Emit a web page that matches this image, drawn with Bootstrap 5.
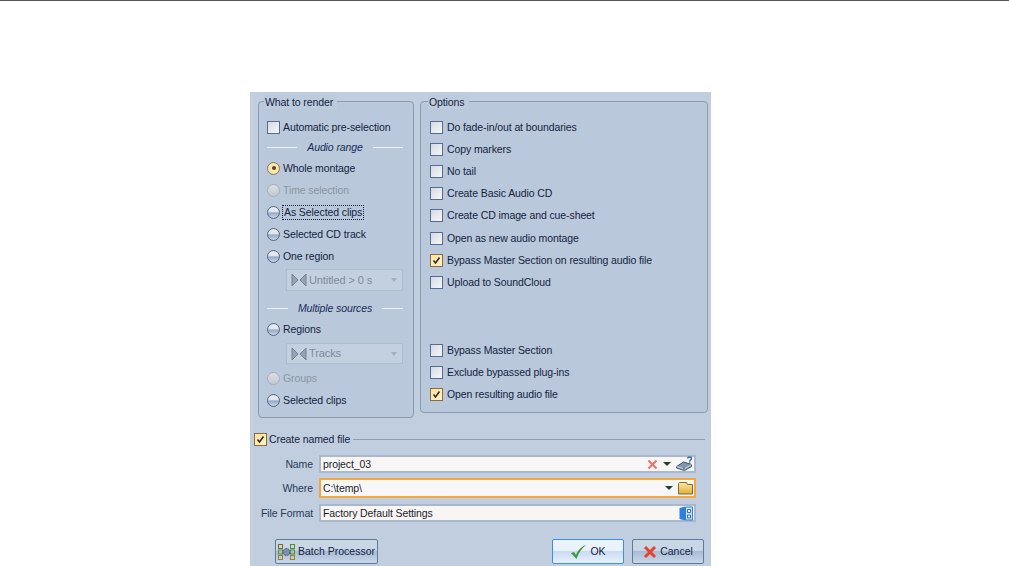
<!DOCTYPE html>
<html lang="en">
<head>
<meta charset="UTF-8">
<title>Render</title>
<link href="https://cdn.jsdelivr.net/npm/bootstrap@5.3.2/dist/css/bootstrap.min.css" rel="stylesheet">
<style>
html, body { height: 100%; overflow: hidden; }
body { background: #fff; border-top: 1px solid #555; font-family: "Liberation Sans", Arial, sans-serif; font-size: 10.5px; letter-spacing: -.1px; color: #15233f; }
.dlg { width: 461px; height: 475px; margin: 91px 0 0 250px; background: #c0cee0; padding: 9px 3px 2px 8px; }
.grp-wrap { gap: 6px; }
.grp { border: 1px solid #8a9ab0; border-radius: 4px; background: #b9c8da; }
.grp-left { width: 156px; height: 317px; padding: 0 10px 0 8px; }
.grp-right { width: 288px; height: 312px; padding: 0 8px 0 9px; }
.grp-title { display: inline-block; margin: -7px 0 0 -3px; height: 14px; line-height: 14px; padding: 0 4px 0 1px; background: #bdcbdd; vertical-align: top; }
.grp-right .grp-title { margin-left: -2px; }
.grp-head { height: 14px; }
.opt { height: 22px; gap: 4px; white-space: nowrap; }
.opt > span:last-child, .sep > span, .fld > span:first-child, .fld-row label, .named > span:nth-child(2) { padding-top: 1px; }
.opt > .focus-box:last-child { padding-top: 0; }
.grp-left .opt { gap: 3px; }
.opt.gap-fix { margin-bottom: 1px; }
.opt.off { color: #8b95a3; }
.cb { width: 13px; height: 13px; flex: none; border: 1px solid #566d93; background: linear-gradient(135deg, #d5dae2, #f6f7f9); display: flex; align-items: center; justify-content: center; }
.cb.on { border-color: #8a6d3a; background: linear-gradient(135deg, #fde2a0, #fff1c8); }
.rd { width: 13px; height: 13px; flex: none; border-radius: 50%; border: 1px solid #566680; background: linear-gradient(#e3e9f1 40%, #98aac6 55%, #c9d4e4); display: flex; align-items: center; justify-content: center; }
.rd.on { border-color: #8c7a50; background: radial-gradient(circle, #fff3cf 0, #fbd88e 100%); }
.rd.on i { width: 4px; height: 4px; border-radius: 50%; background: #5b4311; display: block; }
.rd.dis { border-color: #a7aeb8; background: linear-gradient(#dde0e4, #c3c9d1); }
.focus-box { border: 1px dotted #15233f; padding: 0 1px; margin-left: -1px; line-height: 13px; }
.sep { height: 19px; gap: 10px; font-style: italic; color: #1a2c5a; }
.sep hr, .named hr { flex: 1; margin: 0; border: 0; border-top: 1px solid #eef2f7; opacity: 1; }
.sep.a { height: 18px; margin-bottom: 1px; }
.combo { height: 22px; margin: 2px 0 0 19px; border: 1px solid #adbccf; background: #c3d0e0; color: #7e8a9b; font-size: 11px; padding-left: 4px; gap: 2px; width: 117px; }
.combo.b { height: 21px; margin-top: 3px; margin-bottom: 3px; }
.combo .arrow { margin-left: auto; margin-right: 5px; width: 0; height: 0; border: 3px solid transparent; border-top: 4px solid #a3aebd; border-bottom: 0; }
.spacer-opt { height: 46px; }
.named { height: 16px; margin: 13px 0 0 -4px; gap: 2px; padding-right: 3px; }
.named hr { border-top-color: #8e9fb4; margin-left: 1px; }
.fld-row { margin-left: -4px; gap: 5px; padding-right: 12px; }
.fld-row.r1 { margin-top: 8px; }
.fld-row.r2 { margin-top: 5px; }
.fld-row.r3 { margin-top: 6px; }
.fld-row label { width: 59px; text-align: right; color: #2a3a56; flex: none; margin: 0 1px 0 0; }
.fld { flex: 1; height: 18px; border: 2px solid #aab8cc; background: #f7f6f4; padding: 0 1px 0 2px; color: #1a1f2b; }
.fld.hot { height: 20px; border-color: #f7a63c; background: #f8f7f7; }
.fld .ic { margin-left: auto; gap: 5px; }
.tri { width: 0; height: 0; border: 4px solid transparent; border-top: 4px solid #26402f; border-bottom: 0; }
.btns { margin: 17px 0 0 17px; }
.xbtn { height: 25px; border: 1px solid #62799e; border-radius: 2px; background: linear-gradient(#c9d6e6 45%, #a9bcd6 50%, #c8d6e8); gap: 3px; font-size: 10.5px; color: #15233f; padding: 0; }
.xbtn.batch { width: 103px; }
.xbtn.ok { width: 72px; border-color: #3b8fe8; background: linear-gradient(#eaf2fb 45%, #c9dcf3 50%, #e8f1fc); }
.xbtn.cancel { width: 72px; margin-left: 8px; }
.btn-spacer { width: 174px; }
.fld svg { overflow: visible; display: block; }
</style>
</head>
<body>
<div class="dlg">
  <div class="d-flex grp-wrap">
    <div class="grp grp-left flex-none">
      <div class="grp-head"><span class="grp-title">What to render</span></div>
      <div class="opt d-flex align-items-center"><span class="cb"></span><span>Automatic pre-selection</span></div>
      <div class="sep a d-flex align-items-center"><hr><span>Audio range</span><hr></div>
      <div class="opt d-flex align-items-center"><span class="rd on"><i></i></span><span>Whole montage</span></div>
      <div class="opt off d-flex align-items-center"><span class="rd dis"></span><span>Time selection</span></div>
      <div class="opt d-flex align-items-center"><span class="rd"></span><span class="focus-box">As Selected clips</span></div>
      <div class="opt d-flex align-items-center"><span class="rd"></span><span>Selected CD track</span></div>
      <div class="opt d-flex align-items-center"><span class="rd"></span><span>One region</span></div>
      <div class="combo d-flex align-items-center">
        <svg width="16" height="14" viewBox="0 0 16 14"><path d="M1 1l6 6-6 6z" fill="#96a3b4" stroke="#76828f"/><path d="M15 1L9 7l6 6z" fill="#96a3b4" stroke="#76828f"/></svg>
        <span>Untitled &gt; 0 s</span><span class="arrow"></span>
      </div>
      <div class="sep d-flex align-items-center mt-2"><hr><span>Multiple sources</span><hr></div>
      <div class="opt d-flex align-items-center"><span class="rd"></span><span>Regions</span></div>
      <div class="combo b d-flex align-items-center">
        <svg width="16" height="14" viewBox="0 0 16 14"><path d="M1 1l6 6-6 6z" fill="#96a3b4" stroke="#76828f"/><path d="M15 1L9 7l6 6z" fill="#96a3b4" stroke="#76828f"/></svg>
        <span>Tracks</span><span class="arrow"></span>
      </div>
      <div class="opt off d-flex align-items-center"><span class="rd dis"></span><span>Groups</span></div>
      <div class="opt d-flex align-items-center"><span class="rd"></span><span>Selected clips</span></div>
    </div>
    <div class="grp grp-right flex-none">
      <div class="grp-head"><span class="grp-title">Options</span></div>
      <div class="opt d-flex align-items-center"><span class="cb"></span><span>Do fade-in/out at boundaries</span></div>
      <div class="opt d-flex align-items-center"><span class="cb"></span><span>Copy markers</span></div>
      <div class="opt d-flex align-items-center"><span class="cb"></span><span>No tail</span></div>
      <div class="opt d-flex align-items-center"><span class="cb"></span><span>Create Basic Audio CD</span></div>
      <div class="opt gap-fix d-flex align-items-center"><span class="cb"></span><span>Create CD image and cue-sheet</span></div>
      <div class="opt d-flex align-items-center"><span class="cb"></span><span>Open as new audio montage</span></div>
      <div class="opt d-flex align-items-center"><span class="cb on"><svg width="9" height="9" viewBox="0 0 9 9"><path d="M1.5 4.5L3.5 7 7.5 1.5" fill="none" stroke="#2b2a20" stroke-width="1.5"/></svg></span><span>Bypass Master Section on resulting audio file</span></div>
      <div class="opt d-flex align-items-center"><span class="cb"></span><span>Upload to SoundCloud</span></div>
      <div class="spacer-opt"></div>
      <div class="opt d-flex align-items-center"><span class="cb"></span><span>Bypass Master Section</span></div>
      <div class="opt d-flex align-items-center"><span class="cb"></span><span>Exclude bypassed plug-ins</span></div>
      <div class="opt d-flex align-items-center"><span class="cb on"><svg width="9" height="9" viewBox="0 0 9 9"><path d="M1.5 4.5L3.5 7 7.5 1.5" fill="none" stroke="#2b2a20" stroke-width="1.5"/></svg></span><span>Open resulting audio file</span></div>
    </div>
  </div>

  <div class="named d-flex align-items-center"><span class="cb on"><svg width="9" height="9" viewBox="0 0 9 9"><path d="M1.5 4.5L3.5 7 7.5 1.5" fill="none" stroke="#2b2a20" stroke-width="1.5"/></svg></span><span>Create named file</span><hr></div>

  <div class="fld-row r1 d-flex align-items-center">
    <label>Name</label>
    <div class="fld d-flex align-items-center"><span>project_03</span>
      <span class="ic d-flex align-items-center">
        <svg width="11" height="11" viewBox="0 0 11 11"><path d="M1.5 1.5l8 8M9.5 1.5l-8 8" stroke="#ea7468" stroke-width="2"/></svg>
        <span class="tri"></span>
        <svg width="17" height="14" viewBox="0 0 17 14"><path d="M.5 9.500l7-4.500 8 2.500v2l-7 4-8-2.500z" fill="#8495b0" stroke="#46546c"/><path d="M.5 9.500l8 2.500 7-4.500" fill="none" stroke="#cfd7e3"/><circle cx="8" cy="11.500" r=".9" fill="#3f9d4c"/><path d="M11.500 1.500c.5-2 4-2 4 0 0 1.500-1.800 1.500-1.800 3.200M13.700 5.500v1.200" fill="none" stroke="#2f62b8" stroke-width="1.400"/></svg>
      </span>
    </div>
  </div>
  <div class="fld-row r2 d-flex align-items-center">
    <label>Where</label>
    <div class="fld hot d-flex align-items-center"><span>C:\temp\</span>
      <span class="ic d-flex align-items-center">
        <span class="tri"></span>
        <svg width="15" height="14" viewBox="0 0 15 14"><defs><linearGradient id="fold" x1="0" y1="0" x2="0" y2="1"><stop offset="0" stop-color="#fbeaa0"/><stop offset="1" stop-color="#e3ad3a"/></linearGradient></defs><path d="M.5 13V2.500l1-1h7l1 2h5V13z" fill="url(#fold)" stroke="#7e6a34"/></svg>
      </span>
    </div>
  </div>
  <div class="fld-row r3 d-flex align-items-center">
    <label>File Format</label>
    <div class="fld d-flex align-items-center"><span>Factory Default Settings</span>
      <span class="ic d-flex align-items-center">
        <svg width="14" height="15" viewBox="0 0 14 15"><path d="M.5 2L6 .5v14L.5 13z" fill="#2f80dc"/><path d="M6.500 1h7v13h-7z" fill="#cfe3f8" stroke="#2f80dc"/><path d="M8.500 3.500h3v3h-3zM8.500 9h3v3h-3z" fill="#eaf3fc" stroke="#2f70c0"/></svg>
      </span>
    </div>
  </div>

  <div class="btns d-flex">
    <button class="btn xbtn batch d-flex align-items-center justify-content-center" type="button">
      <svg width="17" height="16" viewBox="0 0 17 16"><g fill="none" stroke-width="1"><rect x=".5" y=".5" width="4" height="4" stroke="#7c6a1f"/><rect x="12.500" y=".5" width="4" height="4" stroke="#4f8f2f"/><rect x=".5" y="6" width="4" height="4" stroke="#4f8f2f"/><rect x="12.500" y="6" width="4" height="4" stroke="#4f8f2f"/><rect x=".5" y="11.500" width="4" height="4" stroke="#a08020"/><rect x="12.500" y="11.500" width="4" height="4" stroke="#a08020"/></g><circle cx="8.500" cy="8" r="3.500" fill="#7d8db5" stroke="#47557a" stroke-dasharray="2 1"/></svg>
      <span>Batch Processor</span>
    </button>
    <div class="btn-spacer"></div>
    <button class="btn xbtn ok d-flex align-items-center justify-content-center" type="button">
      <svg width="17" height="16" viewBox="0 0 17 16"><path d="M1 9l3-1 2 3c2-5 5-8 10-10C11 5 8 10 6.500 15z" fill="#3f9a3a"/></svg>
      <span>OK</span>
    </button>
    <button class="btn xbtn cancel d-flex align-items-center justify-content-center" type="button">
      <svg width="14" height="14" viewBox="0 0 14 14"><path d="M2 2l10 10M12 2L2 12" stroke="#e5432f" stroke-width="3"/></svg>
      <span>Cancel</span>
    </button>
  </div>
</div>
<script src="https://cdn.jsdelivr.net/npm/bootstrap@5.3.2/dist/js/bootstrap.bundle.min.js"></script>
</body>
</html>
